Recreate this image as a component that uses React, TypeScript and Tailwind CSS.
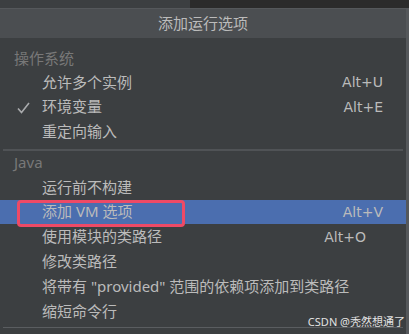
const cjk = { fontFamily: '"Noto Sans", "Noto Sans CJK SC", sans-serif' };

type Item = { label: string; shortcut?: string; checked?: boolean; active?: boolean; pr?: string };

const osItems: Item[] = [
  { label: "允许多个实例", shortcut: "Alt+U" },
  { label: "环境变量", shortcut: "Alt+E", checked: true },
  { label: "重定向输入" },
];

const javaItems: Item[] = [
  { label: "运行前不构建" },
  { label: "添加 VM 选项", shortcut: "Alt+V", active: true },
  { label: "使用模块的类路径", shortcut: "Alt+O", pr: "pr-[40px]" },
  { label: "修改类路径" },
  { label: '将带有 "provided" 范围的依赖项添加到类路径' },
  { label: "缩短命令行" },
];

function Check() {
  return (
    <svg width="13" height="12" viewBox="0 0 13 12" className="absolute left-[17px] top-[7px]">
      <polyline points="1,6.5 4.5,10.5 12,1" fill="none" stroke="#a9abad" strokeWidth="1.6" />
    </svg>
  );
}

function Row({ item, h }: { item: Item; h: string }) {
  return (
    <div className={`relative flex items-center ${h} ${item.active ? "bg-[#4b6eaf]" : ""}`}>
      {item.checked ? <Check /> : null}
      {item.active ? (
        <div className="absolute left-[17px] top-0 h-[27px] w-[168px] rounded-[4px] border-[3px] border-[#ee4a66]" />
      ) : null}
      <span className="pl-[42px] text-[15px] leading-none text-[#bbbbbb]">{item.label}</span>
      {item.shortcut ? (
        <span
          className={`ml-auto ${item.pr ?? "pr-[23px]"} text-[14px] leading-none text-[#bbbbbb]`}
          style={{ fontFamily: '"DejaVu Sans", sans-serif' }}
        >
          {item.shortcut}
        </span>
      ) : null}
    </div>
  );
}

export default function App() {
  return (
    <div className="relative h-[334px] w-[409px] overflow-hidden bg-[#3c3f41]" style={cjk}>
      <div className="flex h-[8px]">
        <div className="w-[190px] bg-[#3c3f41]" />
        <div className="flex-1 bg-[#2b2b2b]" />
      </div>
      <div className="flex h-[326px]">
        <div className="flex w-[406px] flex-col">
          <div className="flex h-[30px] items-center justify-center border-t border-[#55585b] bg-[#4b4e51] text-[15px] text-[#bbbbbb]">
            添加运行选项
          </div>
          <div className="pt-[8px]">
            <div className="flex h-[24px] items-center pl-[14px] text-[15px] leading-none text-[#787878]">操作系统</div>
            {osItems.map((it) => (
              <Row key={it.label} item={it} h="h-[24.6px]" />
            ))}
            <div className="mx-[3px] mt-[5px] h-[2px] bg-[#505356]" />
            <div className="flex h-[24px] items-center pl-[14px] text-[15px] leading-none text-[#787878]">Java</div>
            {javaItems.map((it) => (
              <Row key={it.label} item={it} h="h-[24.8px]" />
            ))}
            <div className="mx-[3px] mt-[3px] h-[1px] bg-[#5a5d60]" />
          </div>
        </div>
        <div className="w-[3px] bg-[#55585b]" />
      </div>
      <div className="absolute bottom-[7px] right-[4px] text-[11px] leading-none text-[#e2e2e2]">CSDN @秃然想通了</div>
    </div>
  );
}
